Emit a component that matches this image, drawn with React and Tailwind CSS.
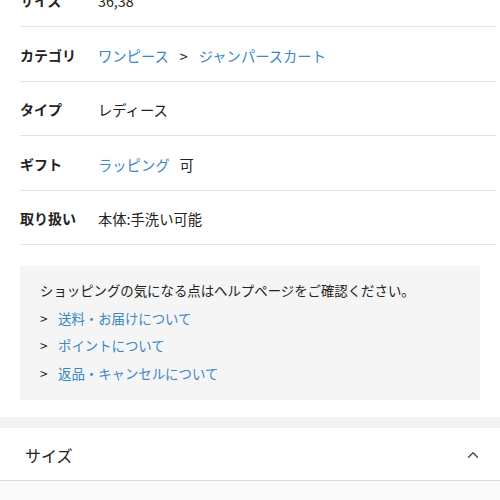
import React from "react";
import { ChevronUp } from "lucide-react";

const font = { fontFamily: '"Noto Sans CJK JP", "Noto Sans", sans-serif' };

function Row({ label, children }) {
  return (
    <div className="flex items-center h-[54.5px] pt-[3px] border-b border-[#e3e3e3] ml-5 mr-1">
      <div className="w-[78px] shrink-0 text-[14px] font-bold text-[#222]">{label}</div>
      <div className="text-[14.3px] text-[#222] flex items-center">{children}</div>
    </div>
  );
}

const Link = ({ children }) => <span className="text-[#3a87c6]">{children}</span>;

export default function App() {
  return (
    <div className="w-[500px] h-[500px] overflow-hidden bg-white" style={font}>
      <div className="-mt-[27.5px]">
        <Row label="サイズ">36,38</Row>
        <Row label="カテゴリ">
          <Link>ワンピース</Link>
          <span className="mx-[11px]">&gt;</span>
          <Link>ジャンパースカート</Link>
        </Row>
        <Row label="タイプ">レディース</Row>
        <Row label="ギフト">
          <Link>ラッピング</Link>
          <span className="ml-[10px]">可</span>
        </Row>
        <Row label="取り扱い">本体:手洗い可能</Row>
      </div>
      <div className="mt-[21px] mx-5 bg-[#f5f5f5] pl-5 pt-[11px] pb-[13px] text-[13.4px] leading-[27.5px] text-[#222]">
        <div>ショッピングの気になる点はヘルプページをご確認ください。</div>
        {["送料・お届けについて", "ポイントについて", "返品・キャンセルについて"].map((t) => (
          <div key={t} className="flex">
            <span className="w-[18px]">&gt;</span>
            <Link>{t}</Link>
          </div>
        ))}
      </div>
      <div className="h-[17px]" />
      <div className="h-[11px] bg-[#f2f2f2]" />
      <div className="h-[53px] flex items-center justify-between pl-[25px] pr-[18px] pt-[2px] border-b border-[#d8d8d8]">
        <span className="text-[16px] text-[#222]">サイズ</span>
        <ChevronUp size={18} strokeWidth={1.8} color="#444" />
      </div>
      <div className="h-[30px] bg-[#fafafa]" />
    </div>
  );
}
